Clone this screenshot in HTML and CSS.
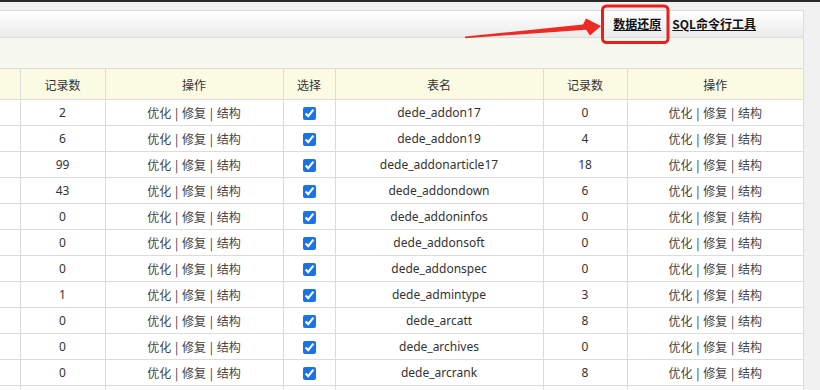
FILE: index.html
```html
<!DOCTYPE html>
<html lang="zh-CN">
<head>
<meta charset="utf-8">
<title>数据库备份</title>
<link rel="stylesheet" href="styles.css">
</head>
<body>
<div class="topline"></div>
<div class="page">
  <div class="wrap">
    <div class="titlebar">
      <a class="tool-link" href="#">数据还原</a>
      <a class="tool-link" href="#">SQL命令行工具</a>
    </div>
    <div class="band"></div>
    <table class="tables">
      <colgroup>
        <col class="c-cut"><col class="c-num"><col class="c-op"><col class="c-sel"><col class="c-name"><col class="c-num2"><col class="c-op2">
      </colgroup>
      <thead>
        <tr><th class="cut"></th><th>记录数</th><th>操作</th><th>选择</th><th>表名</th><th>记录数</th><th>操作</th></tr>
      </thead>
      <tbody>
        <tr><td class="cut"></td><td>2</td><td class="ops"><a href="#">优化</a> | <a href="#">修复</a> | <a href="#">结构</a></td><td><input type="checkbox" checked></td><td>dede_addon17</td><td>0</td><td class="ops"><a href="#">优化</a> | <a href="#">修复</a> | <a href="#">结构</a></td></tr>
        <tr><td class="cut"></td><td>6</td><td class="ops"><a href="#">优化</a> | <a href="#">修复</a> | <a href="#">结构</a></td><td><input type="checkbox" checked></td><td>dede_addon19</td><td>4</td><td class="ops"><a href="#">优化</a> | <a href="#">修复</a> | <a href="#">结构</a></td></tr>
        <tr><td class="cut"></td><td>99</td><td class="ops"><a href="#">优化</a> | <a href="#">修复</a> | <a href="#">结构</a></td><td><input type="checkbox" checked></td><td>dede_addonarticle17</td><td>18</td><td class="ops"><a href="#">优化</a> | <a href="#">修复</a> | <a href="#">结构</a></td></tr>
        <tr><td class="cut"></td><td>43</td><td class="ops"><a href="#">优化</a> | <a href="#">修复</a> | <a href="#">结构</a></td><td><input type="checkbox" checked></td><td>dede_addondown</td><td>6</td><td class="ops"><a href="#">优化</a> | <a href="#">修复</a> | <a href="#">结构</a></td></tr>
        <tr><td class="cut"></td><td>0</td><td class="ops"><a href="#">优化</a> | <a href="#">修复</a> | <a href="#">结构</a></td><td><input type="checkbox" checked></td><td>dede_addoninfos</td><td>0</td><td class="ops"><a href="#">优化</a> | <a href="#">修复</a> | <a href="#">结构</a></td></tr>
        <tr><td class="cut"></td><td>0</td><td class="ops"><a href="#">优化</a> | <a href="#">修复</a> | <a href="#">结构</a></td><td><input type="checkbox" checked></td><td>dede_addonsoft</td><td>0</td><td class="ops"><a href="#">优化</a> | <a href="#">修复</a> | <a href="#">结构</a></td></tr>
        <tr><td class="cut"></td><td>0</td><td class="ops"><a href="#">优化</a> | <a href="#">修复</a> | <a href="#">结构</a></td><td><input type="checkbox" checked></td><td>dede_addonspec</td><td>0</td><td class="ops"><a href="#">优化</a> | <a href="#">修复</a> | <a href="#">结构</a></td></tr>
        <tr><td class="cut"></td><td>1</td><td class="ops"><a href="#">优化</a> | <a href="#">修复</a> | <a href="#">结构</a></td><td><input type="checkbox" checked></td><td>dede_admintype</td><td>3</td><td class="ops"><a href="#">优化</a> | <a href="#">修复</a> | <a href="#">结构</a></td></tr>
        <tr><td class="cut"></td><td>0</td><td class="ops"><a href="#">优化</a> | <a href="#">修复</a> | <a href="#">结构</a></td><td><input type="checkbox" checked></td><td>dede_arcatt</td><td>8</td><td class="ops"><a href="#">优化</a> | <a href="#">修复</a> | <a href="#">结构</a></td></tr>
        <tr><td class="cut"></td><td>0</td><td class="ops"><a href="#">优化</a> | <a href="#">修复</a> | <a href="#">结构</a></td><td><input type="checkbox" checked></td><td>dede_archives</td><td>0</td><td class="ops"><a href="#">优化</a> | <a href="#">修复</a> | <a href="#">结构</a></td></tr>
        <tr><td class="cut"></td><td>0</td><td class="ops"><a href="#">优化</a> | <a href="#">修复</a> | <a href="#">结构</a></td><td><input type="checkbox" checked></td><td>dede_arcrank</td><td>8</td><td class="ops"><a href="#">优化</a> | <a href="#">修复</a> | <a href="#">结构</a></td></tr>
        <tr><td class="cut"></td><td></td><td></td><td></td><td></td><td></td><td></td></tr>
      </tbody>
    </table>
  </div>
</div>
<svg class="annotation" width="820" height="390" viewBox="0 0 820 390" aria-hidden="true">
  <polygon points="465,36.6 583,24.6 586,18.5 601,26 590,35.5 586,29.8 465,38.2" fill="#ee2a24"/>
  <rect x="602.5" y="6" width="65.5" height="36.5" rx="4" ry="4" fill="none" stroke="#e8201c" stroke-width="3"/>
</svg>
</body>
</html>
```

FILE: styles.css
```css
html, body {
  margin: 0;
  padding: 0;
}

body {
  position: relative;
  background: #f1f1f1;
  font-family: "Noto Sans", "Noto Sans CJK SC", sans-serif;
  font-size: 12px;
  color: #333;
  overflow: hidden;
  height: 390px;
}

.topline {
  height: 2px;
  background: #2a2a2a;
}

.page {
  padding-top: 8px;
}

.wrap {
  width: 803px;
  background: #fff;
  border-top: 1px solid #dcdcdc;
  border-right: 1px solid #dcdcdc;
}

.titlebar {
  height: 26px;
  display: flex;
  align-items: center;
  justify-content: flex-end;
  gap: 11px;
  padding-right: 47px;
  background: linear-gradient(#ffffff, #ebebeb);
  border-bottom: 1px solid #dcdcdc;
}

.tool-link {
  color: #111;
  font-weight: bold;
  text-decoration: underline;
  font-family: "Noto Sans CJK SC", sans-serif;
  font-size: 12px;
  line-height: 14px;
}

.band {
  height: 30px;
  background: #f7f8ee;
  border-bottom: 1px solid #dcdcdc;
}

.tables {
  width: 803px;
  table-layout: fixed;
  border-collapse: collapse;
}

.c-cut { width: 20px; }
.c-num { width: 85px; }
.c-op { width: 178px; }
.c-sel { width: 52px; }
.c-name { width: 208px; }
.c-num2 { width: 84px; }
.c-op2 { width: 176px; }

.tables th,
.tables td {
  border: 1px solid #dcdcdc;
  text-align: center;
  padding: 0;
  white-space: nowrap;
  overflow: hidden;
}

.tables tr > :last-child {
  border-right: none;
}

.tables .cut {
  border-left: none;
}

.tables thead tr:first-child th {
  border-top: none;
}

.tables th {
  height: 30px;
  background: #fbfbe4;
  font-weight: normal;
  color: #333;
  font-family: "Noto Sans CJK SC", sans-serif;
}

.tables td {
  height: 25px;
  color: #333;
}

.ops {
  font-family: "Noto Sans CJK SC", sans-serif;
  color: #222;
  word-spacing: 1px;
}

.ops a {
  color: #444;
  text-decoration: none;
}

.tables input[type="checkbox"] {
  margin: 0;
  width: 13px;
  height: 13px;
  vertical-align: middle;
  accent-color: #1a73e8;
}

.annotation {
  position: absolute;
  left: 0;
  top: 0;
  pointer-events: none;
}
```
